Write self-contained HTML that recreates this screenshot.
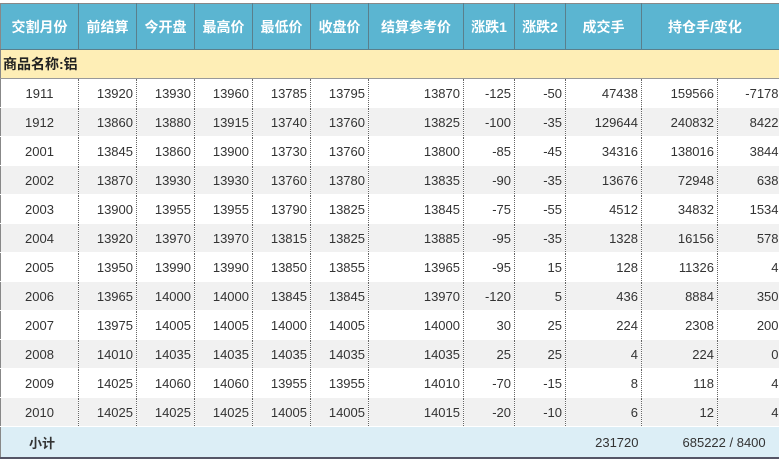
<!DOCTYPE html>
<html><head><meta charset="utf-8"><style>
body{margin:0;background:#fff;width:779px;height:458px;overflow:hidden;font-family:"Liberation Sans","Noto Sans CJK SC",sans-serif;}
table{position:absolute;left:0;top:3px;border-collapse:collapse;table-layout:fixed;width:780px;border-left:1px solid #888;}
td,th{padding:0 3px 0 0;font-size:13px;color:#333;white-space:nowrap;overflow:hidden;}
th{background:#5bb5d1;color:#fff;font-weight:bold;height:45px;border-right:1px solid #5a7f8c;border-top:1px solid #888;border-bottom:1px solid #5a7f8c;text-align:center;font-size:14px;padding:0}
tr.cat td{background:#feeeb6;height:28px;font-weight:bold;font-size:14px;color:#222;padding-left:2px;border-bottom:1px solid #999}
tr.d td{height:28px;text-align:right;border-right:1px dotted #666;border-bottom:1px solid #fff}
tr.d td:first-child{text-align:center;padding:0}
tr.d:nth-child(even) td{background:#f1f1f1}
tr.d td:last-child{border-right:none;padding-right:2px}
tr.f td{background:#dceef6;height:30px;text-align:right;border-top:1px solid #bbb;border-bottom:2px solid #556}
</style></head><body>
<table>
<colgroup><col style="width:78px"><col style="width:58px"><col style="width:58px"><col style="width:58px"><col style="width:58px"><col style="width:58px"><col style="width:95px"><col style="width:51px"><col style="width:51px"><col style="width:76px"><col style="width:76px"><col style="width:63px"></colgroup>
<tr><th>交割月份</th><th>前结算</th><th>今开盘</th><th>最高价</th><th>最低价</th><th>收盘价</th><th>结算参考价</th><th>涨跌1</th><th>涨跌2</th><th>成交手</th><th colspan="2" style="text-align:left;padding-left:26px">持仓手/变化</th></tr>
<tr class="cat"><td colspan="12">商品名称:铝</td></tr>
<tr class="d"><td>1911</td><td>13920</td><td>13930</td><td>13960</td><td>13785</td><td>13795</td><td>13870</td><td>-125</td><td>-50</td><td>47438</td><td>159566</td><td>-7178</td></tr>
<tr class="d"><td>1912</td><td>13860</td><td>13880</td><td>13915</td><td>13740</td><td>13760</td><td>13825</td><td>-100</td><td>-35</td><td>129644</td><td>240832</td><td>8422</td></tr>
<tr class="d"><td>2001</td><td>13845</td><td>13860</td><td>13900</td><td>13730</td><td>13760</td><td>13800</td><td>-85</td><td>-45</td><td>34316</td><td>138016</td><td>3844</td></tr>
<tr class="d"><td>2002</td><td>13870</td><td>13930</td><td>13930</td><td>13760</td><td>13780</td><td>13835</td><td>-90</td><td>-35</td><td>13676</td><td>72948</td><td>638</td></tr>
<tr class="d"><td>2003</td><td>13900</td><td>13955</td><td>13955</td><td>13790</td><td>13825</td><td>13845</td><td>-75</td><td>-55</td><td>4512</td><td>34832</td><td>1534</td></tr>
<tr class="d"><td>2004</td><td>13920</td><td>13970</td><td>13970</td><td>13815</td><td>13825</td><td>13885</td><td>-95</td><td>-35</td><td>1328</td><td>16156</td><td>578</td></tr>
<tr class="d"><td>2005</td><td>13950</td><td>13990</td><td>13990</td><td>13850</td><td>13855</td><td>13965</td><td>-95</td><td>15</td><td>128</td><td>11326</td><td>4</td></tr>
<tr class="d"><td>2006</td><td>13965</td><td>14000</td><td>14000</td><td>13845</td><td>13845</td><td>13970</td><td>-120</td><td>5</td><td>436</td><td>8884</td><td>350</td></tr>
<tr class="d"><td>2007</td><td>13975</td><td>14005</td><td>14005</td><td>14000</td><td>14005</td><td>14000</td><td>30</td><td>25</td><td>224</td><td>2308</td><td>200</td></tr>
<tr class="d"><td>2008</td><td>14010</td><td>14035</td><td>14035</td><td>14035</td><td>14035</td><td>14035</td><td>25</td><td>25</td><td>4</td><td>224</td><td>0</td></tr>
<tr class="d"><td>2009</td><td>14025</td><td>14060</td><td>14060</td><td>13955</td><td>13955</td><td>14010</td><td>-70</td><td>-15</td><td>8</td><td>118</td><td>4</td></tr>
<tr class="d"><td>2010</td><td>14025</td><td>14025</td><td>14025</td><td>14005</td><td>14005</td><td>14015</td><td>-20</td><td>-10</td><td>6</td><td>12</td><td>4</td></tr>
<tr class="f"><td style="text-align:left;padding-left:28px;font-weight:bold">小计</td><td colspan="8"></td><td>231720</td><td colspan="2" style="text-align:left;padding-left:41px">685222 / 8400</td></tr>
</table>
</body></html>
